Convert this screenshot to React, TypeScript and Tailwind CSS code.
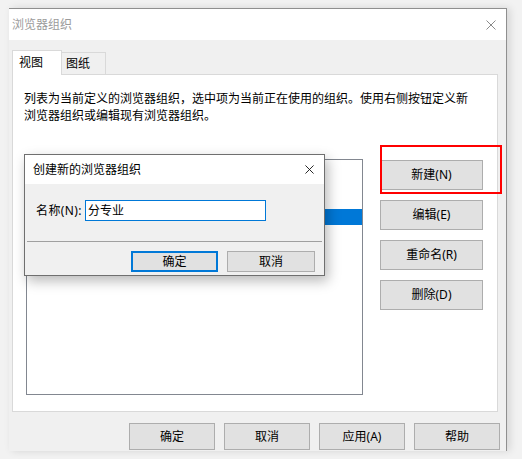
import React from 'react';

const font = "font-['Noto_Sans','Noto_Sans_CJK_SC',sans-serif]";

const CloseIcon: React.FC<{ color: string; size: number }> = ({ color, size }) => (
  <svg width={size} height={size} viewBox="0 0 10 10">
    <path d="M0.5 0.5 L9.5 9.5 M9.5 0.5 L0.5 9.5" stroke={color} strokeWidth="1" fill="none" />
  </svg>
);

const WinButton: React.FC<{ label: string; className?: string }> = ({ label, className = '' }) => (
  <div
    className={`flex items-center justify-center bg-[#e1e1e1] border border-[#adadad] text-[12px] leading-none text-black ${className}`}
  >
    {label}
  </div>
);

export default function App() {
  return (
    <div className={`relative w-[522px] h-[459px] overflow-hidden bg-[#f2f2f2] pt-[8px] pl-[9px] ${font}`}>
      {/* Main window */}
      <div className="w-[498px] h-[443px] flex flex-col border-t border-r border-[#8f8f8f] shadow-[3px_0_8px_rgba(0,0,0,0.12)]">
        {/* Title bar */}
        <div className="h-[31px] bg-white flex items-center justify-between pl-[3px] pr-[10px]">
          <span className="text-[12px] text-[#9b9b9b]">浏览器组织</span>
          <CloseIcon color="#8a8a8a" size={10} />
        </div>

        <div className="flex-1 bg-[#f0f0f0] pt-[9px]">
          {/* Tabs */}
          <div className="ml-[3px] flex items-end h-[25px]">
            <div className="relative z-10 mb-[-1px] w-[50px] h-[25px] bg-white border border-b-0 border-[#d9d9d9] pl-[6px] pt-[3px] text-[12px] leading-[17px]">
              视图
            </div>
            <div className="w-[44px] h-[22px] bg-[#f0f0f0] border border-l-0 border-b-0 border-[#d9d9d9] pl-[4px] pt-[2px] text-[12px] leading-[17px]">
              图纸
            </div>
          </div>

          {/* Tab panel */}
          <div className="ml-[3px] w-[486px] h-[338px] bg-white border border-[#d9d9d9] pl-[11px] pt-[15px]">
            <div className="text-[12px] leading-[17px] text-black">
              <div>列表为当前定义的浏览器组织，选中项为当前正在使用的组织。使用右侧按钮定义新</div>
              <div>浏览器组织或编辑现有浏览器组织。</div>
            </div>

            <div className="flex mt-[35px] ml-[2px]">
              <div className="w-[337px] h-[236px] border border-[#828790] bg-white pt-[49px]">
                <div className="h-[16px] bg-[#0078d7]" />
              </div>
              <div className="ml-[17px] mt-[1px] flex flex-col gap-[10px]">
                <WinButton label="新建(N)" className="w-[103px] h-[30px]" />
                <WinButton label="编辑(E)" className="w-[103px] h-[30px]" />
                <WinButton label="重命名(R)" className="w-[103px] h-[30px]" />
                <WinButton label="删除(D)" className="w-[103px] h-[30px]" />
              </div>
            </div>
          </div>

          {/* Bottom buttons */}
          <div className="mt-[11px] pr-[6px] flex justify-end gap-[9px]">
            <WinButton label="确定" className="w-[86px] h-[27px]" />
            <WinButton label="取消" className="w-[86px] h-[27px]" />
            <WinButton label="应用(A)" className="w-[86px] h-[27px]" />
            <WinButton label="帮助" className="w-[86px] h-[27px]" />
          </div>
        </div>
      </div>

      {/* Highlight annotation */}
      <div className="absolute left-[380px] top-[145px] w-[122px] h-[49px] border-2 border-[#ff0000]" />

      {/* Modal dialog */}
      <div className="absolute left-[24px] top-[154px] w-[301px] h-[122px] flex flex-col border border-[#6f6f6f] bg-[#f0f0f0] shadow-[3px_5px_12px_rgba(0,0,0,0.28)]">
        <div className="h-[29px] bg-white flex items-center justify-between pl-[8px] pr-[10px]">
          <span className="text-[12px] text-black">创建新的浏览器组织</span>
          <CloseIcon color="#111111" size={9} />
        </div>
        <div className="flex items-center pt-[16px] pl-[11px]">
          <span className="w-[49px] text-[12px] leading-none tracking-[0.4px]">名称(N):</span>
          <div className="w-[181px] h-[21px] border border-[#0078d7] bg-white flex items-center pl-[2px] text-[12px] leading-none">
            分专业
          </div>
        </div>
        <div className="mt-[20px] mx-[2px] h-px bg-[#a0a0a0]" />
        <div className="mt-[9px] pr-[9px] flex justify-end gap-[9px]">
          <div className="w-[87px] h-[21px] flex items-center justify-center bg-[#e1e1e1] border-2 border-[#0078d7] text-[12px] leading-none">
            确定
          </div>
          <WinButton label="取消" className="w-[88px] h-[21px]" />
        </div>
      </div>
    </div>
  );
}
